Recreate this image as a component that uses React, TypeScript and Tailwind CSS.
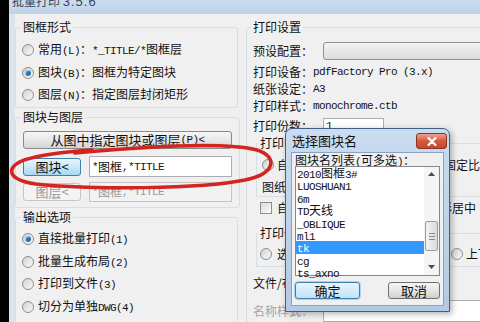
import React from 'react';

// latin runs are drawn in a narrow mono face, like SimSun's half-width glyphs
const MONO = "font-['Liberation_Mono',monospace] text-[11px] tracking-[-0.6px]";

const Mx = ({ t }: { t: string }) => {
  const parts = t.split(/([\x20-\x7e]+)/);
  return (
    <>
      {parts.map((p, i) =>
        /^[\x20-\x7e]+$/.test(p) ? (
          <span key={i} className={MONO}>
            {p}
          </span>
        ) : (
          p
        )
      )}
    </>
  );
};

const Radio = ({ on }: { on?: boolean }) => (
  <span className="inline-flex h-[12px] w-[12px] shrink-0 items-center justify-center rounded-full border border-[#8e8f8f] bg-linear-to-br from-[#d2d2d2] to-[#fafafa]">
    {on && <span className="h-[6px] w-[6px] rounded-full bg-[#2c6fb4] shadow-[inset_1px_1px_1px_#a9d6fa]" />}
  </span>
);

const Check = () => (
  <span className="inline-block h-[12px] w-[12px] shrink-0 border border-[#8e8f8f] bg-linear-to-br from-[#dcdcdc] to-[#fbfbfb]" />
);

const RadioRow = ({ label, on }: { label: string; on?: boolean }) => (
  <div className="flex h-[22.4px] items-center gap-[4px]">
    <Radio on={on} />
    <span>
      <Mx t={label} />
    </span>
  </div>
);

const Legend = ({ children, ml = 'ml-[5px]' }: { children: React.ReactNode; ml?: string }) => (
  <legend className={`${ml} px-[2px] leading-[14px]`}>{children}</legend>
);

const items = ['2010图框3#', 'LUOSHUAN1', '6m', 'TD天线', '_OBLIQUE', 'ml1', 'tk', 'cg', 'ts_axno'];

export default function App() {
  return (
    <div className="relative flex h-[322px] w-[480px] overflow-hidden bg-black font-['Noto_Sans_CJK_SC',sans-serif] text-[12px] leading-[14px] text-[#111]">
      <div className="w-[9px] shrink-0 bg-black" />

      {/* main window */}
      <div className="flex flex-1 flex-col bg-[#d9e4ef]">
        <div className="h-[14px] shrink-0 overflow-hidden bg-linear-to-b from-[#cbdcee] to-[#bed3e9] pl-[3px]">
          <div className="-mt-[6px] text-[12px] leading-[14px] text-[#38485c]">
            批量打印 <span className="font-['Liberation_Sans',sans-serif] text-[13px] tracking-[1px]">3.5.6</span>
          </div>
        </div>

        <div className="ml-[6px] flex flex-1 gap-[8px] overflow-hidden bg-[#f0f0f0] pt-[6px]">
          {/* left column */}
          <div className="flex w-[223px] shrink-0 flex-col gap-[2px]">
            <fieldset className="rounded-[3px] border border-[#d5dfe5]">
              <Legend>图框形式</Legend>
              <div className="pl-[6px] pt-[5px] pb-[1px]">
                <RadioRow label="常用(L)：*_TITLE/*图框层" />
                <RadioRow label="图块(B)：图框为特定图块" on />
                <RadioRow label="图层(N)：指定图层封闭矩形" />
              </div>
            </fieldset>

            <fieldset className="rounded-[3px] border border-[#d5dfe5]">
              <Legend>图块与图层</Legend>
              <div className="px-[7px] pt-[7px] pb-[5px]">
                <div className="flex h-[18px] items-center justify-center rounded-[3px] border border-[#8a8a8a] bg-linear-to-b from-[#f6f6f6] via-[#e8e8e8] to-[#d4d4d4] text-[13px]">
                  <Mx t="从图中指定图块或图层(P)<" />
                </div>
                <div className="mt-[7px] flex h-[21px] items-center gap-[8px]">
                  <div className="flex h-[18px] w-[58px] items-center justify-center rounded-[3px] border border-[#3c7fb1] bg-linear-to-b from-[#eaf6fd] via-[#c9e9fb] to-[#a6d7f4] text-[13px]">
                    图块&lt;
                  </div>
                  <div className="flex h-[21px] w-[143px] items-center border border-[#abadb3] bg-white pl-[2px]">
                    <Mx t="*图框,*TITLE" />
                  </div>
                </div>
                <div className="mt-[5px] flex h-[20px] items-center gap-[8px] text-[#9a9a9a]">
                  <div className="flex h-[18px] w-[58px] items-center justify-center rounded-[3px] border border-[#c4c7ca] bg-[#f4f4f4] text-[13px]">
                    图层&lt;
                  </div>
                  <div className="flex h-[20px] w-[143px] items-center border border-[#c4c4c4] bg-[#f2f2f2] pl-[2px]">
                    <Mx t="*图框,*TITLE" />
                  </div>
                </div>
              </div>
            </fieldset>

            <fieldset className="rounded-[3px] border border-[#d5dfe5]">
              <Legend>输出选项</Legend>
              <div className="pl-[6px] pt-[4px]">
                <RadioRow label="直接批量打印(1)" on />
                <RadioRow label="批量生成布局(2)" />
                <RadioRow label="打印到文件(3)" />
                <RadioRow label="切分为单独DWG(4)" />
                <RadioRow label="导出为PDF(5)" />
              </div>
            </fieldset>
          </div>

          {/* right column */}
          <fieldset className="w-[260px] shrink-0 self-start rounded-[3px] border border-[#d5dfe5]">
            <Legend ml="ml-[4px]">打印设置</Legend>
            <div className="pl-[6px] pt-[8px]">
              <div className="flex h-[18px] items-center">
                <span className="w-[70px]">预设配置：</span>
                <div className="h-[18px] flex-1 rounded-[3px] border border-[#8e8f8f] bg-linear-to-b from-[#f3f3f3] to-[#dcdcdc]" />
              </div>
              <div className="mt-[3px] flex h-[17px] items-center">
                <Mx t="打印设备：pdfFactory Pro (3.x)" />
              </div>
              <div className="flex h-[17px] items-center">
                <Mx t="纸张设定：A3" />
              </div>
              <div className="flex h-[17px] items-center">
                <Mx t="打印样式：monochrome.ctb" />
              </div>
              <div className="mt-[4px] flex h-[16px] items-center">
                <span className="w-[70px]">打印份数：</span>
                <div className="flex h-[16px] w-[61px] items-center border border-[#abadb3] bg-white pl-[2px]">
                  <span className={MONO}>1</span>
                </div>
              </div>

              <fieldset className="mt-[2px] ml-[3px] border border-[#d5dfe5]">
                <Legend ml="ml-[1px]">打印区域</Legend>
                <div className="pl-[5px] pt-[5px] pb-[2px]">
                  <div className="flex h-[20px] items-center">
                    <div className="flex w-[182px] items-center gap-[3px]">
                      <Radio />
                      <span>自动识别图框</span>
                    </div>
                    <span>固定比例</span>
                  </div>
                  <div className="mt-[5px] flex h-[14px] items-center">图纸方向</div>
                </div>
              </fieldset>

              <div className="ml-[7px] mt-[4px] flex h-[14px] items-center">
                <div className="flex w-[168px] items-center gap-[5px]">
                  <Check />
                  <span>自动旋转</span>
                </div>
                <span>图形居中</span>
              </div>

              <fieldset className="mt-[11px] ml-[3px] border border-[#d5dfe5]">
                <Legend ml="ml-[1px]">打印偏移</Legend>
                <div className="pl-[3px] pt-[6px] pb-[4px]">
                  <div className="flex h-[16px] items-center">
                    <div className="flex w-[191px] items-center gap-[5px]">
                      <Radio />
                      <span>选择</span>
                    </div>
                    <div className="flex items-center gap-[3px]">
                      <Radio />
                      <span>上下</span>
                    </div>
                  </div>
                </div>
              </fieldset>

              <div className="mt-[9px] flex h-[14px] items-center">文件/布局</div>
              <div className="mt-[10px] flex h-[22px] items-center">
                <span className="w-[70px] text-[#a4a4a4]">名称样式：</span>
                <div className="h-[22px] flex-1 border border-[#abadb3] bg-white" />
              </div>
            </div>
          </fieldset>
        </div>
      </div>

      {/* red hand-drawn ellipse */}
      <svg className="pointer-events-none absolute left-0 top-0" width="480" height="322">
        <path
          d="M 75 153 C 150 146, 228 142, 257 150 C 279 157, 275 174, 245 180 C 200 189, 92 190, 36 184 C 8 180, 4 168, 24 160 C 40 155, 62 152, 92 150"
          stroke="#d42420"
          strokeWidth="3.5"
          fill="none"
          strokeLinecap="round"
        />
      </svg>

      {/* dialog */}
      <div className="absolute left-[285px] top-[128px] flex h-[184px] w-[165px] flex-col rounded-t-[7px] border border-[#3f5f86] bg-linear-to-b from-[#c9dcf0] to-[#b2cae5] px-[5px] pb-[5px] shadow-[2px_2px_6px_rgba(0,0,0,0.3)]">
        <div className="flex h-[23px] shrink-0 items-start justify-between">
          <span className="pl-[1px] pt-[5px] text-[13px] leading-[14px]">选择图块名</span>
          <div className="-mr-[3px] mt-[4px] flex h-[16px] w-[31px] items-center justify-center rounded-[3px] border border-[#8b3325] bg-linear-to-b from-[#eba38f] via-[#d5573f] to-[#c44a2f]">
            <svg width="10" height="9" viewBox="0 0 10 9">
              <path d="M1.5 1 L8.5 8 M8.5 1 L1.5 8" stroke="white" strokeWidth="2.2" strokeLinecap="round" />
            </svg>
          </div>
        </div>
        <div className="flex flex-1 flex-col border border-[#8aa2bf] bg-[#f0f0f0] pl-[3px] pr-[3px]">
          <div className="h-[13px] leading-[13px]">
            <Mx t="图块名列表(可多选)：" />
          </div>
          <div className="flex h-[110px] border border-[#828790] bg-white">
            <div className="w-[128px] pt-[0px]">
              {items.map((it) => (
                <div
                  key={it}
                  className={`h-[12.4px] pl-[1px] leading-[12.4px] ${it === 'tk' ? 'bg-[#3399ff] text-white' : ''}`}
                >
                  <Mx t={it} />
                </div>
              ))}
            </div>
            <div className="flex w-[15px] flex-col bg-[#f4f4f4]">
              <div className="flex h-[14px] items-center justify-center">
                <svg width="7" height="4" viewBox="0 0 7 4">
                  <path d="M0 4 L3.5 0 L7 4 Z" fill="#4d4d4d" />
                </svg>
              </div>
              <div className="flex-1">
                <div className="mx-[1px] mt-[40px] flex h-[30px] flex-col items-center justify-center gap-[2px] rounded-[2px] border border-[#9a9a9a] bg-linear-to-r from-[#f3f3f3] to-[#dadada]">
                  <span className="h-[1px] w-[6px] bg-[#8a8a8a]" />
                  <span className="h-[1px] w-[6px] bg-[#8a8a8a]" />
                  <span className="h-[1px] w-[6px] bg-[#8a8a8a]" />
                </div>
              </div>
              <div className="flex h-[16px] items-center justify-center">
                <svg width="7" height="4" viewBox="0 0 7 4">
                  <path d="M0 0 L3.5 4 L7 0 Z" fill="#4d4d4d" />
                </svg>
              </div>
            </div>
          </div>
          <div className="mt-[6px] flex items-center justify-between">
            <div className="flex h-[17px] w-[65px] items-center justify-center rounded-[3px] border border-[#3c7fb1] bg-linear-to-b from-[#e8f5fc] to-[#c1e3f6] shadow-[0_0_0_1px_#a9d6f4] text-[13px]">
              确定
            </div>
            <div className="flex h-[17px] w-[52px] items-center justify-center rounded-[3px] border border-[#707070] bg-linear-to-b from-[#f4f4f4] via-[#e6e6e6] to-[#d0d0d0] text-[13px]">
              取消
            </div>
          </div>
        </div>
      </div>
    </div>
  );
}
